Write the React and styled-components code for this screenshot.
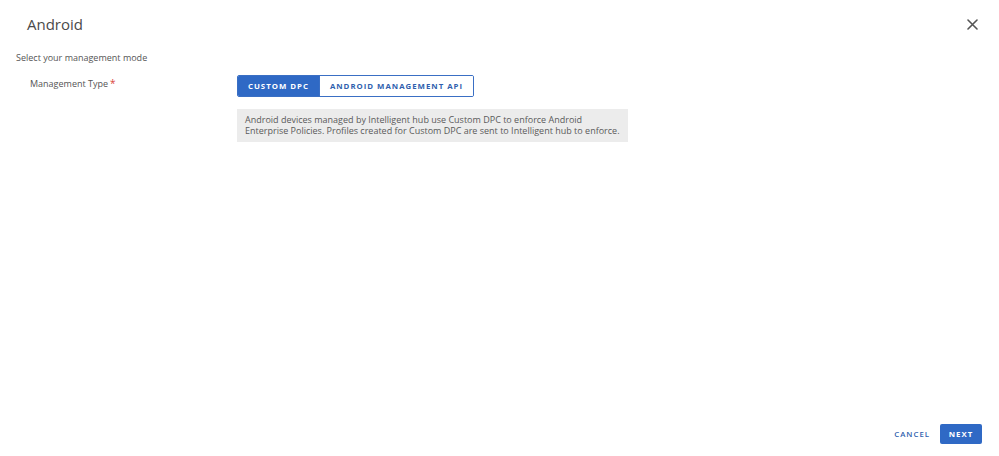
import React, { useState } from "react";
import styled, { createGlobalStyle } from "styled-components";

const GlobalStyle = createGlobalStyle`
  html, body {
    margin: 0;
    padding: 0;
    background: #fff;
    font-family: "Open Sans", "Noto Sans", sans-serif;
  }
  #root {
    height: 100vh;
  }
`;

const modes = [
  { id: "dpc", label: "Custom DPC" },
  { id: "api", label: "Android Management API" },
];

const App = () => {
  const [mode, setMode] = useState("dpc");

  return (
    <Modal>
      <GlobalStyle />
      <Header>
        <Title>Android</Title>
        <CloseButton aria-label="Close">
          <svg width="11" height="11" viewBox="0 0 11 11">
            <path d="M1 1 L10 10 M10 1 L1 10" stroke="#555" strokeWidth="1.6" strokeLinecap="round" />
          </svg>
        </CloseButton>
      </Header>

      <Body>
        <Subtitle>Select your management mode</Subtitle>
        <FieldRow>
          <Label>
            Management Type<Required>*</Required>
          </Label>
          <FieldContent>
            <Segmented>
              {modes.map((m) => (
                <Segment key={m.id} $active={mode === m.id} onClick={() => setMode(m.id)}>
                  {m.label}
                </Segment>
              ))}
            </Segmented>
            <InfoBox>
              Android devices managed by Intelligent hub use Custom DPC to enforce Android
              Enterprise Policies. Profiles created for Custom DPC are sent to Intelligent hub to enforce.
            </InfoBox>
          </FieldContent>
        </FieldRow>
      </Body>

      <Footer>
        <TextButton>Cancel</TextButton>
        <PrimaryButton>Next</PrimaryButton>
      </Footer>
    </Modal>
  );
};

const Modal = styled.div`
  height: 100%;
  display: flex;
  flex-direction: column;
  color: #555;
`;

const Header = styled.div`
  display: flex;
  justify-content: space-between;
  align-items: center;
  padding: 14px 21px 0 27px;
`;

const Title = styled.h2`
  margin: 0;
  font-size: 15px;
  font-weight: 400;
  color: #4a4a4a;
  line-height: 20px;
`;

const CloseButton = styled.button`
  border: none;
  background: transparent;
  padding: 0;
  width: 11px;
  height: 11px;
  display: flex;
  cursor: pointer;
`;

const Body = styled.div`
  flex: 1;
  padding: 17px 16px 0 16px;
`;

const Subtitle = styled.p`
  margin: 0;
  font-size: 9px;
  line-height: 13px;
  color: #555;
`;

const FieldRow = styled.div`
  display: grid;
  grid-template-columns: 207px 1fr;
  padding-left: 14px;
  margin-top: 11px;
`;

const Label = styled.div`
  font-size: 9px;
  line-height: 13px;
  color: #555;
  padding-top: 2px;
`;

const Required = styled.span`
  color: #d9453b;
  margin-left: 2px;
  font-size: 10px;
`;

const FieldContent = styled.div`
  display: flex;
  flex-direction: column;
  align-items: flex-start;
  gap: 12px;
`;

const Segmented = styled.div`
  display: flex;
  border: 1px solid #3a6fc4;
  border-radius: 2px;
  overflow: hidden;
`;

const Segment = styled.button`
  height: 20px;
  padding: 0 10px;
  border: none;
  font-family: inherit;
  font-size: 7.8px;
  font-weight: 700;
  letter-spacing: 1px;
  text-transform: uppercase;
  cursor: pointer;
  background: ${(p) => (p.$active ? "#2f69c5" : "#fff")};
  color: ${(p) => (p.$active ? "#fff" : "#2f5fae")};
  & + & {
    border-left: 1px solid #3a6fc4;
  }
`;

const InfoBox = styled.div`
  width: 391px;
  box-sizing: border-box;
  background: #ececec;
  padding: 6px 8px 6px 8px;
  font-size: 9px;
  line-height: 10.5px;
  color: #5a5a5a;
`;

const Footer = styled.div`
  display: flex;
  justify-content: flex-end;
  align-items: center;
  gap: 10px;
  padding: 0 17px 12px 0;
`;

const TextButton = styled.button`
  border: none;
  background: transparent;
  font-family: inherit;
  font-size: 7.8px;
  font-weight: 600;
  letter-spacing: 1px;
  text-transform: uppercase;
  color: #2f5fae;
  padding: 0;
  cursor: pointer;
`;

const PrimaryButton = styled.button`
  border: none;
  border-radius: 2px;
  background: #2f69c5;
  color: #fff;
  font-family: inherit;
  font-size: 7.8px;
  font-weight: 700;
  letter-spacing: 1px;
  text-transform: uppercase;
  height: 20px;
  width: 42px;
  cursor: pointer;
`;

export default App;
